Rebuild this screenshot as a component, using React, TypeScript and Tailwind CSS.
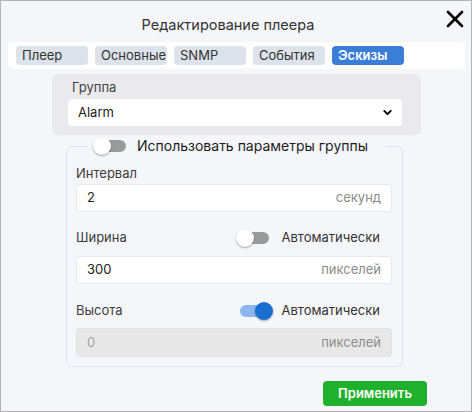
import React from 'react';
import { X, ChevronDown } from 'lucide-react';

const tabs = ['Плеер', 'Основные', 'SNMP', 'События', 'Эскизы'];

const Toggle: React.FC<{ on?: boolean }> = ({ on }) => (
  <div className="relative w-[34px] h-[18px] shrink-0">
    <div
      className={
        on
          ? 'absolute left-[1px] right-[1px] top-[3px] h-[12px] rounded-full bg-[#8db7ec]'
          : 'absolute left-[1px] right-[1px] top-[3px] h-[12px] rounded-full bg-[#9a9a9a]'
      }
    />
    <div
      className={
        on
          ? 'absolute right-0 top-0 w-[18px] h-[18px] rounded-full bg-[#1b6fd3] shadow-[0_1px_2px_rgba(0,0,0,0.35)]'
          : 'absolute left-0 top-0 w-[18px] h-[18px] rounded-full bg-white shadow-[0_1px_2px_rgba(0,0,0,0.35)]'
      }
    />
  </div>
);

const Field: React.FC<{ value: string; unit: string; disabled?: boolean }> = ({
  value,
  unit,
  disabled,
}) => (
  <div
    className={
      disabled
        ? 'flex items-center justify-between h-[29px] px-[10px] rounded-[4px] border border-[#e2e2e2] bg-[#e8e8e8] text-[13px]'
        : 'flex items-center justify-between h-[28px] px-[10px] rounded-[4px] border border-[#e6e8ec] bg-white text-[13px]'
    }
  >
    <span className={disabled ? 'text-[#a3a3a3]' : 'text-[#222]'}>{value}</span>
    <span className="text-[#8c8c8c]">{unit}</span>
  </div>
);

export default function App() {
  return (
    <div
      className="w-[472px] h-[412px] border border-[#b3b3b3] bg-[#f5f6fa] text-[#333]"
      style={{ fontFamily: 'Inter, "Noto Sans", sans-serif' }}
    >
      <div className="relative pt-[13px] pr-[16px] h-[36px] flex justify-center">
        <span className="text-[14.5px] leading-[22px] text-[#333]">Редактирование плеера</span>
        <button className="absolute right-[2px] top-[4px] text-black">
          <X size={28} strokeWidth={2.3} />
        </button>
      </div>

      <div className="mt-[5px] ml-[7px] w-[457px] h-[27px] bg-white rounded-[5px] flex gap-[7px] pl-[8px] pt-[4px]">
        {tabs.map((t) => (
          <div
            key={t}
            className={
              t === 'Эскизы'
                ? 'w-[72px] h-[19px] rounded-[4px] bg-[#3b7ed8] text-white font-semibold text-[13px] leading-[19px] pl-[6px]'
                : 'w-[72px] h-[19px] rounded-[4px] bg-[#dde3ea] text-[#333] text-[13px] leading-[19px] pl-[6px]'
            }
          >
            {t}
          </div>
        ))}
      </div>

      <div className="mt-[5px] ml-[51px] w-[369px] rounded-[6px] bg-[#e9e9ee] pt-[5px] pb-[9px] pl-[16px] pr-[19px]">
        <div className="text-[13px] leading-[16px] text-[#444] pl-[4px]">Группа</div>
        <div className="mt-[4px] h-[27px] bg-white rounded-[4px] flex items-center justify-between pl-[10px] pr-[8px] text-[13px] text-[#222]">
          <span>Alarm</span>
          <ChevronDown size={13} strokeWidth={3.5} className="text-black" />
        </div>
      </div>

      <fieldset className="mt-[2px] ml-[65px] w-[337px] min-w-0 border border-[#dfe2e8] rounded-[6px] pl-[9px] pr-[10px] pt-[10px] pb-[9px]">
        <legend className="ml-[12px] px-[5px] leading-[18px] whitespace-nowrap">
          <div className="flex items-center gap-[10px]">
            <Toggle />
            <span className="text-[14px] text-[#1e1e1e] pr-[12px]">Использовать параметры группы</span>
          </div>
        </legend>

        <div className="text-[13px] leading-[16px] text-[#3c3c3c]">Интервал</div>
        <div className="mt-[3px]">
          <Field value="2" unit="секунд" />
        </div>

        <div className="mt-[17px] h-[18px] flex items-center justify-between text-[13px]">
          <span className="text-[#3c3c3c]">Ширина</span>
          <div className="flex items-center gap-[12px] mr-[12px]">
            <Toggle />
            <span className="text-[13px] text-[#333]">Автоматически</span>
          </div>
        </div>
        <div className="mt-[9px]">
          <Field value="300" unit="пикселей" />
        </div>

        <div className="mt-[18px] h-[18px] flex items-center justify-between text-[13px]">
          <span className="text-[#3c3c3c]">Высота</span>
          <div className="flex items-center gap-[9px] mr-[12px]">
            <Toggle on />
            <span className="text-[13px] text-[#333]">Автоматически</span>
          </div>
        </div>
        <div className="mt-[8px]">
          <Field value="0" unit="пикселей" disabled />
        </div>
      </fieldset>

      <div className="mt-[14px] flex justify-end pr-[44px]">
        <button className="w-[104px] h-[25px] rounded-[4px] bg-[#1fb12b] text-white text-[13px] font-semibold">
          Применить
        </button>
      </div>
    </div>
  );
}
